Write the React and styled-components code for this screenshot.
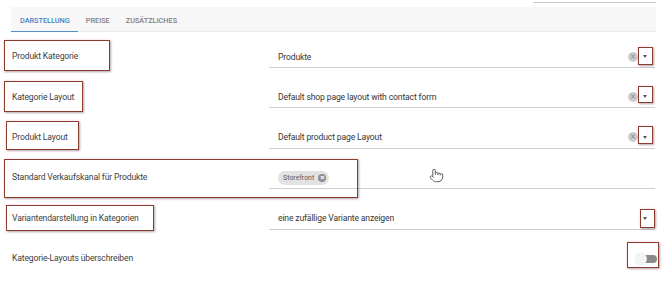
import React from 'react';
import styled, { createGlobalStyle } from 'styled-components';
import { Pointer } from 'lucide-react';

const GlobalStyle = createGlobalStyle`
  html, body {
    margin: 0;
    padding: 0;
    background: #fff;
    font-family: Roboto, "Liberation Sans", sans-serif;
    color: #3a3a3a;
  }
`;

const ROW_H = 40.4;

const rows = [
  {
    label: 'Produkt Kategorie',
    value: 'Produkte',
    clear: true,
    arrow: true,
    mark: { left: 4, top: 4, width: 106, height: 31 },
    arrowMark: { top: 11, height: 18 },
  },
  {
    label: 'Kategorie Layout',
    value: 'Default shop page layout with contact form',
    clear: true,
    arrow: true,
    mark: { left: 4, top: 4.6, width: 79, height: 31 },
    arrowMark: { top: 10, height: 17 },
  },
  {
    label: 'Produkt Layout',
    value: 'Default product page Layout',
    clear: true,
    arrow: true,
    mark: { left: 6, top: 4, width: 73, height: 29 },
    arrowMark: { top: 9, height: 18 },
  },
  {
    label: 'Standard Verkaufskanal für Produkte',
    chip: 'Storefront',
    mark: { left: 4, top: 2, width: 354, height: 39 },
  },
  {
    label: 'Variantendarstellung in Kategorien',
    value: 'eine zufällige Variante anzeigen',
    arrow: true,
    mark: { left: 6, top: 7, width: 148, height: 26 },
    arrowMark: { top: 11.5, height: 19, right: 0 },
  },
];

export default function App() {
  return (
    <>
      <GlobalStyle />
      <Page>
        <SearchLine />
        <TabBar>
          <Tab active>DARSTELLUNG</Tab>
          <Tab>PREISE</Tab>
          <Tab>ZUSÄTZLICHES</Tab>
        </TabBar>
        <Form>
          {rows.map((r) => (
            <Row key={r.label}>
              <Label>{r.label}</Label>
              <Field>
                {r.chip ? (
                  <Chip>
                    {r.chip}
                    <ChipClose>×</ChipClose>
                  </Chip>
                ) : (
                  <Value>{r.value}</Value>
                )}
                {r.clear && <ClearIcon>×</ClearIcon>}
                {r.arrow && <Arrow />}
              </Field>
              <Mark style={r.mark} />
              {r.arrowMark && (
                <ArrowMark
                  style={{ top: r.arrowMark.top, height: r.arrowMark.height }}
                  $right={r.arrowMark.right}
                />
              )}
            </Row>
          ))}
          <Row>
            <Label>Kategorie-Layouts überschreiben</Label>
            <SwitchCell>
              <Switch>
                <Knob />
              </Switch>
            </SwitchCell>
            <SwitchMark />
          </Row>
          <Cursor>
            <Pointer size={15} strokeWidth={1.5} color="#555" fill="#fff" />
          </Cursor>
        </Form>
      </Page>
    </>
  );
}

const Page = styled.div`
  position: relative;
  width: 670px;
  height: 281px;
  overflow: hidden;
`;

const SearchLine = styled.div`
  margin: 2px 0 0 533px;
  width: 123px;
  height: 1px;
  background: #c9c9c9;
`;

const TabBar = styled.div`
  display: flex;
  align-items: stretch;
  margin: 4px 14px 0 11px;
  height: 25px;
  background: #f7f7f7;
  border-bottom: 1px solid #ececec;
  box-sizing: border-box;
`;

const Tab = styled.div`
  display: flex;
  align-items: center;
  padding: 2px 8px 0 8px;
  font-size: 7.3px;
  font-weight: 500;
  color: ${(p) => (p.active ? '#4380c4' : '#808080')};
  border-bottom: 1.5px solid ${(p) => (p.active ? '#5a8fcc' : 'transparent')};
  margin-bottom: -1px;

  &:first-child {
    padding-left: 9px;
  }
`;

const Form = styled.div`
  position: relative;
  margin-top: 4px;
`;

const Row = styled.div`
  position: relative;
  display: grid;
  grid-template-columns: 257px 386px;
  padding-left: 12px;
  height: ${ROW_H}px;
  align-items: center;
`;

const Label = styled.div`
  font-size: 8.6px;
  letter-spacing: -0.15px;
  color: #404040;
  white-space: nowrap;
`;

const Field = styled.div`
  align-self: start;
  margin-top: 10px;
  height: 21px;
  display: flex;
  align-items: center;
  padding-left: 9px;
  padding-right: 5px;
  border-bottom: 1px solid #cfcfcf;
`;

const Value = styled.div`
  flex: 1;
  font-size: 8.6px;
  letter-spacing: -0.15px;
  color: #363636;
  white-space: nowrap;
`;

const ClearIcon = styled.div`
  width: 10px;
  height: 10px;
  border-radius: 50%;
  background: #cdcdcd;
  color: #959595;
  font-size: 10px;
  line-height: 10px;
  text-align: center;
  margin-right: 5px;
`;

const Arrow = styled.div`
  margin-left: auto;
  width: 0;
  height: 0;
  border-left: 2.5px solid transparent;
  border-right: 2.5px solid transparent;
  border-top: 3px solid #555;
  margin-right: 3px;
`;

const Chip = styled.div`
  display: flex;
  align-items: center;
  gap: 4px;
  height: 14px;
  padding: 0 3px 0 5px;
  border-radius: 7px;
  background: #e2e2e2;
  font-size: 7px;
  color: #5a5a5a;
`;

const ChipClose = styled.span`
  width: 8px;
  height: 8px;
  border-radius: 50%;
  background: #8f8f8f;
  color: #fff;
  font-size: 8px;
  line-height: 8px;
  text-align: center;
  font-weight: 700;
`;

const Mark = styled.div`
  position: absolute;
  box-sizing: border-box;
  border: 1.5px solid #8a3d2c;
  box-shadow: 1px 1px 2px rgba(0, 0, 0, 0.3), 0 0 3px rgba(255, 120, 180, 0.25);
  pointer-events: none;
`;

const ArrowMark = styled(Mark)`
  right: ${(p) => (p.$right !== undefined ? p.$right + 15 : 17)}px;
  width: 15px;
`;

const SwitchCell = styled.div`
  display: flex;
  justify-content: flex-end;
  margin-right: -2px;
`;

const Switch = styled.div`
  position: relative;
  width: 17px;
  height: 8px;
  border-radius: 4px;
  background: #8a8a8a;
  margin-top: 1px;
`;

const Knob = styled.div`
  position: absolute;
  left: -5px;
  top: -2px;
  width: 12px;
  height: 12px;
  border-radius: 50%;
  background: #f4f4f4;
  box-shadow: 0 0 1px rgba(0, 0, 0, 0.15);
`;

const SwitchMark = styled(Mark)`
  left: 627px;
  top: 4px;
  width: 32px;
  height: 26px;
`;

const Cursor = styled.div`
  position: absolute;
  left: 429px;
  top: 132px;
  line-height: 0;
`;
